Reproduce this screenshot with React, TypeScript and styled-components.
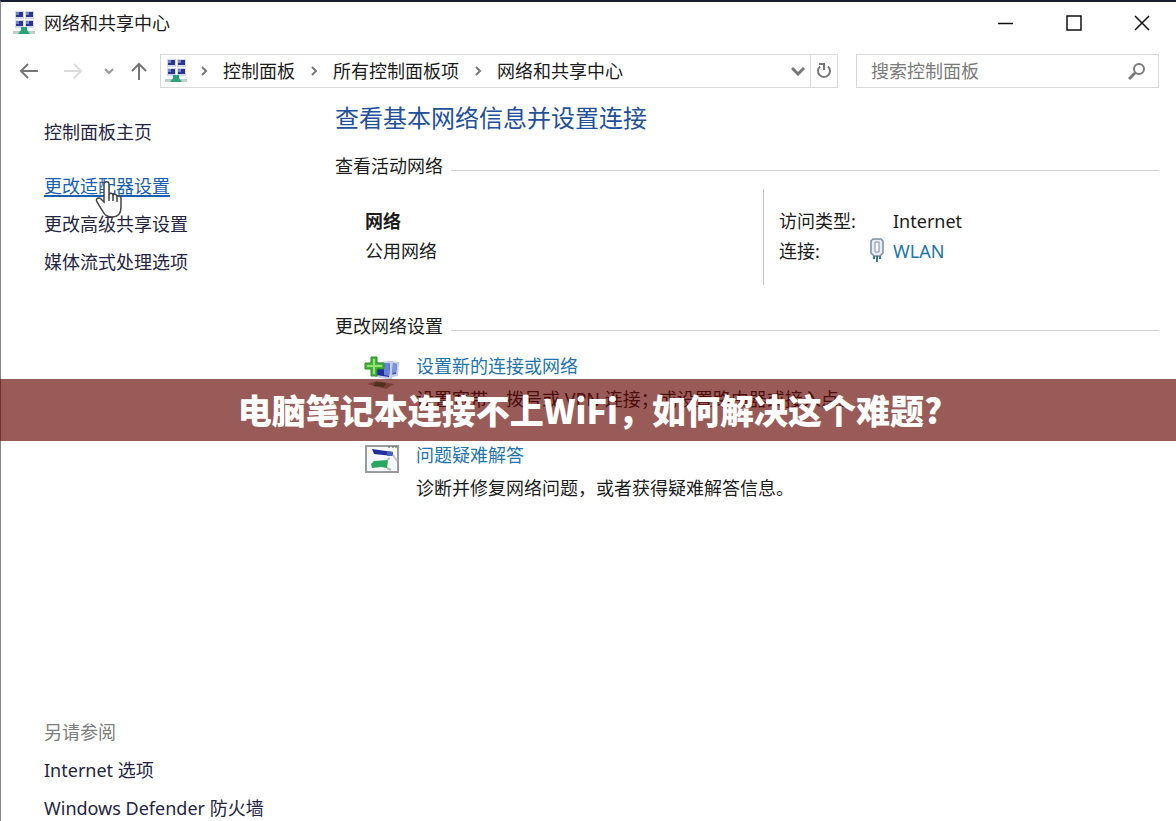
import React from 'react';
import styled, { createGlobalStyle } from 'styled-components';

const Global = createGlobalStyle`
  *, *::before, *::after { box-sizing: border-box; }
  body {
    margin: 0;
    background: #fff;
    color: #1c1c1c;
    font: 18px/24px "Noto Sans", "Noto Sans CJK SC", sans-serif;
  }
  button, input { font: inherit; color: inherit; }
  h1, h2, p, dl, dd, dt, ul { margin: 0; padding: 0; font-weight: 400; }
  svg { display: block; flex: none; }
`;

const Window = styled.div`
  min-height: 100vh;
  display: flex;
  flex-direction: column;
  border-top: 2px solid #1b1d30;
  border-left: 1px solid #85858c;
  overflow: hidden;
`;

const TitleBar = styled.header`
  display: flex;
  align-items: center;
  height: 42px;
  padding-left: 11px;
`;

const WindowTitle = styled.div`
  flex: 1;
  margin-left: 8px;
`;

const IconButton = styled.button<{ $width: number; $tone?: string }>`
  display: flex;
  align-items: center;
  justify-content: center;
  width: ${(p) => p.$width}px;
  height: 32px;
  padding: 0;
  border: 0;
  background: none;
  color: ${(p) => p.$tone ?? '#777'};
`;

const NavBar = styled.nav`
  display: flex;
  align-items: center;
  height: 34px;
  margin-top: 10px;
  padding: 0 17px 0 10px;
`;

const AddressBar = styled.div`
  display: flex;
  align-items: center;
  flex: 1;
  height: 34px;
  margin-left: 4px;
  padding-left: 3px;
  border: 1px solid #d9d9d9;
`;

const Crumbs = styled.ul`
  display: flex;
  flex: 1;
  list-style: none;
`;

const Crumb = styled.li`
  display: flex;
  align-items: center;
  gap: 15px;
  padding-left: 15px;
  color: #777;
  &:first-child { padding-left: 12px; }
`;

const CrumbLink = styled.a`
  color: #1c1c1c;
  text-decoration: none;
`;

const Refresh = styled.div`
  border-left: 1px solid #d9d9d9;
`;

const SearchBox = styled.label`
  display: flex;
  align-items: center;
  width: 303px;
  height: 34px;
  margin-left: 18px;
  padding: 0 12px 0 14px;
  border: 1px solid #d9d9d9;
  color: #7b7b7b;
`;

const SearchInput = styled.input`
  flex: 1;
  min-width: 0;
  padding: 0;
  border: 0;
  outline: 0;
  background: none;
  &::placeholder { color: #7b7b7b; opacity: 1; }
`;

const Body = styled.div`
  display: flex;
  flex: 1;
`;

const Sidebar = styled.aside`
  display: flex;
  flex-direction: column;
  justify-content: space-between;
  width: 334px;
  padding: 32px 0 1px 43px;
`;

const LinkList = styled.div`
  display: flex;
  flex-direction: column;
  align-items: flex-start;
  gap: 14px;
`;

const SideLink = styled.a<{ $active?: boolean }>`
  position: relative;
  color: ${(p) => (p.$active ? '#1a5fb0' : '#25253f')};
  text-decoration: ${(p) => (p.$active ? 'underline 2px' : 'none')};
  text-underline-offset: 2px;
`;

const HomeLink = styled(SideLink)`
  margin-bottom: 16px;
`;

const SeeAlso = styled.h2`
  font-size: 18px;
  color: #7d7d7d;
`;

const Cursor = styled.svg`
  position: absolute;
  left: 51px;
  top: 7px;
  z-index: 1;
`;

const Main = styled.main`
  flex: 1;
  padding: 14px 17px 0 0;
`;

const Heading = styled.h1`
  font-size: 24px;
  line-height: 32px;
  color: #23509a;
`;

const SectionTitle = styled.h2<{ $gap: number }>`
  display: flex;
  align-items: center;
  gap: 8px;
  margin-top: ${(p) => p.$gap}px;
  font-size: 18px;
  &::after {
    content: "";
    flex: 1;
    height: 1px;
    margin-top: 8px;
    background: #cfcfcf;
  }
`;

const Network = styled.section`
  display: flex;
  height: 96px;
  margin-top: 11px;
`;

const NetworkName = styled.div`
  flex: 1;
  padding: 17px 0 0 30px;
  line-height: 30px;
`;

const Details = styled.dl`
  width: 396px;
  display: grid;
  grid-template-columns: 90px 1fr;
  grid-auto-rows: 30px;
  padding: 17px 0 0 15px;
  line-height: 30px;
  border-left: 1px solid #c8c8c8;
`;

const Value = styled.dd`
  display: flex;
  align-items: center;
  padding-left: 24px;
`;

const LinkValue = styled(Value)`
  gap: 8px;
  padding-left: 0;
`;

const TaskLink = styled.a`
  color: #1e74ad;
  text-decoration: none;
`;

const Task = styled.section<{ $gap: number }>`
  display: flex;
  gap: 13px;
  margin-top: ${(p) => p.$gap}px;
  padding-left: 28px;
`;

const TaskText = styled.div`
  display: flex;
  flex-direction: column;
  gap: 9px;
`;

const Banner = styled.div`
  position: absolute;
  left: 0;
  right: 0;
  top: 379px;
  height: 62px;
  padding-left: 4px;
  background: rgba(99, 6, 2, 0.66);
  color: #fff;
  font: 900 34px/62px "Noto Sans CJK SC", sans-serif;
  text-align: center;
`;

const NetworkIcon = () => (
  <svg width="24" height="26" viewBox="0 0 24 26">
    {[[4, 2], [14, 2], [4, 11], [14, 11]].map(([x, y]) => (
      <g key={`${x}-${y}`}>
        <rect x={x - 1} y={y - 1} width="9" height="8" fill="#d3d9ea" />
        <rect x={x} y={y} width="7" height="5" fill="#2c368f" />
        <path d={`M${x} ${y}h3v3h-3z`} fill="#7584c4" />
      </g>
    ))}
    <path d="M1 21h22v3H1z" fill="#c3cdce" />
    <path d="M9 17h6v3l3 4H6l3-4z" fill="#2da37c" />
  </svg>
);

const ConnectIcon = () => (
  <svg width="40" height="40" viewBox="0 0 40 40">
    <path d="M25 7l11 1-1 14-9 2z" fill="#c5cde3" />
    <path d="M27 9l7 1-1 10-6 1z" fill="#3c55b8" />
    <path d="M30 9l4 1-1 8-3 1z" fill="#7d94d8" />
    <path d="M12 8l18-1-1 19-17-3z" fill="#c3cce2" />
    <path d="M13 9l14 0-1 14-13-2z" fill="#222ba0" />
    <path d="M21 9h6l-1 13-5-1z" fill="#6583dc" />
    <path d="M4 30l10-3 17 3-8 5z" fill="#a8aaa4" />
    <path d="M13 28l10 1-2 4-11-1z" fill="#2e8250" />
    <path d="M8 3h6v6h7v6h-7v7H8v-7H2V9h6z" fill="#45b53a" stroke="#2f8a27" />
    <path d="M10 5h2v6h7v2h-7v7h-2v-7H4v-2h6z" fill="#93e274" />
  </svg>
);

const TroubleshootIcon = () => (
  <svg width="40" height="32" viewBox="0 0 40 32">
    <rect x="3" y="3" width="32" height="26" fill="#f7f8f9" stroke="#989ca1" strokeWidth="2" />
    <path d="M25 4h2m2 0h2m1 0h2" stroke="#555" />
    <path d="M9 6l21 3v4l-19-2z" fill="#222f9a" />
    <path d="M24 8l6 1v4h-6z" fill="#4b62bb" />
    <path d="M30 12l4 6" stroke="#c4c9cf" strokeWidth="2" />
    <path d="M8 21l3-3 14-1-1 8-6-1-9 1z" fill="#29a764" />
    <path d="M24 17l3-2m-3 10l4 2" stroke="#b4bec6" strokeWidth="2" />
  </svg>
);

const AdapterIcon = () => (
  <svg width="16" height="26" viewBox="0 0 16 26" fill="none" stroke="#7f8ca6">
    <path d="M2 3l2-2h8l2 2v12l-3 3H5l-3-3z" fill="#e7edf4" strokeWidth="1.5" />
    <path d="M6 4h4v10H6z" fill="#fff" />
    <path d="M5 18v3m3-3v6m3-6v3" stroke="#3b78a8" strokeWidth="2" />
  </svg>
);

const Chevron = () => (
  <svg width="8" height="12" viewBox="0 0 8 12" fill="none" stroke="currentColor" strokeWidth="2">
    <path d="M2 2l4 4-4 4" />
  </svg>
);

export default function App() {
  return (
    <>
      <Global />
      <Window>
        <TitleBar>
          <NetworkIcon />
          <WindowTitle>网络和共享中心</WindowTitle>
          <IconButton $width={68} $tone="#111" aria-label="最小化">
            <svg width="16" height="16" stroke="currentColor" strokeWidth="1.5"><path d="M0 8.5h15" /></svg>
          </IconButton>
          <IconButton $width={68} $tone="#111" aria-label="最大化">
            <svg width="16" height="16" fill="none" stroke="currentColor" strokeWidth="1.5"><path d="M1 1h14v14H1z" /></svg>
          </IconButton>
          <IconButton $width={68} $tone="#111" aria-label="关闭">
            <svg width="16" height="16" stroke="currentColor" strokeWidth="1.5"><path d="M1 1l14 14M15 1L1 15" /></svg>
          </IconButton>
        </TitleBar>
        <NavBar>
          <IconButton $width={36} aria-label="后退">
            <svg width="20" height="16" fill="none" stroke="currentColor" strokeWidth="2"><path d="M19 8H2M9 1L2 8l7 7" /></svg>
          </IconButton>
          <IconButton $width={52} $tone="#dcdcdc" aria-label="前进">
            <svg width="20" height="16" fill="none" stroke="currentColor" strokeWidth="2"><path d="M1 8h17M11 1l7 7-7 7" /></svg>
          </IconButton>
          <IconButton $width={20} $tone="#999" aria-label="最近浏览的位置">
            <svg width="10" height="8" fill="none" stroke="currentColor" strokeWidth="2"><path d="M1 2l4 4 4-4" /></svg>
          </IconButton>
          <IconButton $width={37} aria-label="向上">
            <svg width="18" height="18" fill="none" stroke="currentColor" strokeWidth="2"><path d="M10 18V2M3 9l7-7 7 7" /></svg>
          </IconButton>
          <AddressBar>
            <NetworkIcon />
            <Crumbs>
              {['控制面板', '所有控制面板项', '网络和共享中心'].map((name) => (
                <Crumb key={name}>
                  <Chevron />
                  <CrumbLink href="#">{name}</CrumbLink>
                </Crumb>
              ))}
            </Crumbs>
            <IconButton $width={24} aria-label="展开">
              <svg width="14" height="10" fill="none" stroke="currentColor" strokeWidth="3"><path d="M1 2l6 6 6-6" /></svg>
            </IconButton>
            <Refresh>
              <IconButton $width={26} aria-label="刷新">
                <svg width="18" height="18" fill="none" stroke="currentColor" strokeWidth="2"><path d="M13 4.500a6 6 0 1 1-8 0M4 2h5v6" /></svg>
              </IconButton>
            </Refresh>
          </AddressBar>
          <SearchBox>
            <SearchInput type="text" placeholder="搜索控制面板" aria-label="搜索控制面板" />
            <svg width="18" height="18" fill="none" stroke="currentColor" strokeWidth="2"><circle cx="11" cy="7" r="5" /><path d="M7 11l-6 6" strokeWidth="3" /></svg>
          </SearchBox>
        </NavBar>
        <Body>
          <Sidebar>
            <LinkList>
              <HomeLink href="#">控制面板主页</HomeLink>
              <SideLink href="#" $active>
                更改适配器设置
                <Cursor width="28" height="38" viewBox="0 0 28 38">
                  <path d="M9 3c0-3 5-3 5 0v11c1-3 4-2 4 1 1-3 4-2 4 1 1-2 4-1 4 1v9c0 7-4 10-9 10-6 0-8-3-10-7l-5-8c-2-4 2-5 4-3l3 3z" fill="#fff" stroke="#444" strokeWidth="1.5" />
                  <path d="M14 13v7m4-5v5m4-4v5" stroke="#444" strokeWidth="1.5" />
                </Cursor>
              </SideLink>
              <SideLink href="#">更改高级共享设置</SideLink>
              <SideLink href="#">媒体流式处理选项</SideLink>
            </LinkList>
            <LinkList>
              <SeeAlso>另请参阅</SeeAlso>
              <SideLink href="#">Internet 选项</SideLink>
              <SideLink href="#">Windows Defender 防火墙</SideLink>
            </LinkList>
          </Sidebar>
          <Main>
            <Heading>查看基本网络信息并设置连接</Heading>
            <SectionTitle $gap={20}>查看活动网络</SectionTitle>
            <Network>
              <NetworkName>
                <b>网络</b>
                <p>公用网络</p>
              </NetworkName>
              <Details>
                <dt>访问类型:</dt>
                <Value>Internet</Value>
                <dt>连接:</dt>
                <LinkValue>
                  <AdapterIcon />
                  <TaskLink href="#">WLAN</TaskLink>
                </LinkValue>
              </Details>
            </Network>
            <SectionTitle $gap={29}>更改网络设置</SectionTitle>
            <Task $gap={16}>
              <ConnectIcon />
              <TaskText>
                <TaskLink href="#">设置新的连接或网络</TaskLink>
                <p>设置宽带、拨号或 VPN 连接；或设置路由器或接入点。</p>
              </TaskText>
            </Task>
            <Task $gap={32}>
              <TroubleshootIcon />
              <TaskText>
                <TaskLink href="#">问题疑难解答</TaskLink>
                <p>诊断并修复网络问题，或者获得疑难解答信息。</p>
              </TaskText>
            </Task>
          </Main>
        </Body>
      </Window>
      <Banner>电脑笔记本连接不上WiFi，如何解决这个难题?</Banner>
    </>
  );
}
